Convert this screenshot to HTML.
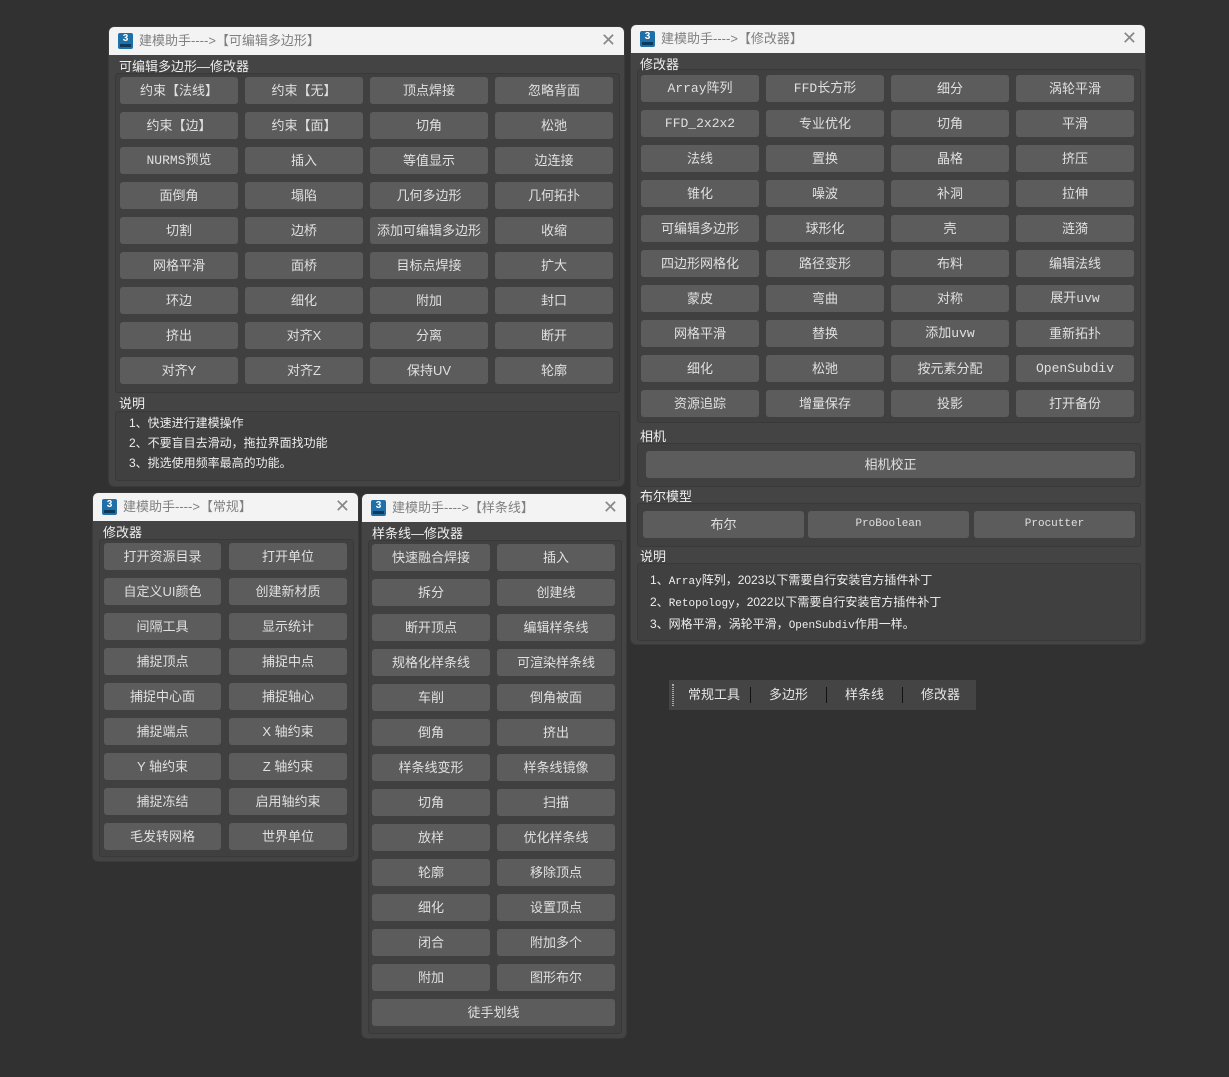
<!DOCTYPE html>
<html><head><meta charset="utf-8"><style>
*{margin:0;padding:0;box-sizing:border-box}
body{width:1229px;height:1077px;background:#313131;position:relative;overflow:hidden;font-family:"Liberation Sans","Noto Sans CJK SC",sans-serif;font-size:13px;color:#e6e6e6}
.win{position:absolute;background:#444;border-radius:6px;overflow:hidden;border:1px solid #3a3a3a}
.tb{height:28px;background:#f3f3f3;position:relative;color:#808080;font-size:13px;line-height:28px;padding-left:30px}
.ic{position:absolute;left:9px;top:6px;width:15px;height:16px;background:#1f6fa8;border-radius:2px;color:#fff;font-size:10px;line-height:11px;text-align:center;font-weight:bold}
.ic:after{content:"";position:absolute;left:2px;right:2px;bottom:2px;height:3px;background:#0d3a5a}
.x{position:absolute;right:8px;top:0;font-size:18px;color:#888;line-height:26px}
.lbl{position:absolute;font-size:13px;color:#eee;z-index:3;line-height:16px}
.grp{position:absolute;border:1px solid #393939;background:#404040;border-radius:3px}
.g{position:absolute;display:grid;column-gap:7px;row-gap:8px;grid-auto-rows:27px}
.g div,.b{background:#5c5c5c;border-radius:3px;text-align:center;line-height:27px;font-size:13px;color:#e0e0e0;white-space:nowrap}
.b{position:absolute;height:27px}
.m{font-family:"Liberation Mono","Noto Sans CJK SC",monospace;font-size:11px}
.t{position:absolute;font-size:12px;color:#eee;line-height:20px}
</style></head><body>

<!-- Window 1 -->
<div class="win" style="left:108px;top:26px;width:517px;height:461px">
<div class="tb"><span class="ic">3</span>建模助手----&gt;【可编辑多边形】<span class="x">✕</span></div>
<div class="lbl" style="left:10px;top:32px">可编辑多边形—修改器</div>
<div class="grp" style="left:6px;top:46px;width:505px;height:320px"></div>
<div class="g" style="left:11px;top:50px;grid-template-columns:repeat(4,118px)">
<div>约束【法线】</div><div>约束【无】</div><div>顶点焊接</div><div>忽略背面</div>
<div>约束【边】</div><div>约束【面】</div><div>切角</div><div>松弛</div>
<div class="m">NURMS预览</div><div>插入</div><div>等值显示</div><div>边连接</div>
<div>面倒角</div><div>塌陷</div><div>几何多边形</div><div>几何拓扑</div>
<div>切割</div><div>边桥</div><div>添加可编辑多边形</div><div>收缩</div>
<div>网格平滑</div><div>面桥</div><div>目标点焊接</div><div>扩大</div>
<div>环边</div><div>细化</div><div>附加</div><div>封口</div>
<div>挤出</div><div>对齐X</div><div>分离</div><div>断开</div>
<div>对齐Y</div><div>对齐Z</div><div>保持UV</div><div>轮廓</div>
</div>
<div class="lbl" style="left:10px;top:369px">说明</div>
<div class="grp" style="left:6px;top:384px;width:505px;height:70px"></div>
<div class="t" style="left:20px;top:386px">1、快速进行建模操作<br>2、不要盲目去滑动，拖拉界面找功能<br>3、挑选使用频率最高的功能。</div>
</div>

<!-- Window 2 -->
<div class="win" style="left:630px;top:24px;width:516px;height:621px">
<div class="tb"><span class="ic">3</span>建模助手----&gt;【修改器】<span class="x">✕</span></div>
<div class="lbl" style="left:9px;top:32px">修改器</div>
<div class="grp" style="left:6px;top:44px;width:504px;height:354px"></div>
<div class="g" style="left:10px;top:50px;grid-template-columns:repeat(4,118px)">
<div class="m">Array阵列</div><div class="m">FFD长方形</div><div>细分</div><div>涡轮平滑</div>
<div class="m">FFD_2x2x2</div><div>专业优化</div><div>切角</div><div>平滑</div>
<div>法线</div><div>置换</div><div>晶格</div><div>挤压</div>
<div>锥化</div><div>噪波</div><div>补洞</div><div>拉伸</div>
<div>可编辑多边形</div><div>球形化</div><div>壳</div><div>涟漪</div>
<div>四边形网格化</div><div>路径变形</div><div>布料</div><div>编辑法线</div>
<div>蒙皮</div><div>弯曲</div><div>对称</div><div class="m">展开uvw</div>
<div>网格平滑</div><div>替换</div><div class="m">添加uvw</div><div>重新拓扑</div>
<div>细化</div><div>松弛</div><div>按元素分配</div><div class="m">OpenSubdiv</div>
<div>资源追踪</div><div>增量保存</div><div>投影</div><div>打开备份</div>
</div>
<div class="lbl" style="left:9px;top:404px">相机</div>
<div class="grp" style="left:6px;top:418px;width:504px;height:44px"></div>
<div class="b" style="left:15px;top:426px;width:489px">相机校正</div>
<div class="lbl" style="left:9px;top:464px">布尔模型</div>
<div class="grp" style="left:6px;top:478px;width:504px;height:44px"></div>
<div class="b" style="left:12px;top:486px;width:161px">布尔</div>
<div class="b m" style="left:177px;top:486px;width:161px">ProBoolean</div>
<div class="b m" style="left:343px;top:486px;width:161px">Procutter</div>
<div class="lbl" style="left:9px;top:524px">说明</div>
<div class="grp" style="left:6px;top:538px;width:504px;height:78px"></div>
<div class="t" style="left:19px;top:545px">1、<span class="m">Array</span>阵列，2023以下需要自行安装官方插件补丁<br>2、<span class="m">Retopology</span>，2022以下需要自行安装官方插件补丁<br>3、网格平滑，涡轮平滑，<span class="m">OpenSubdiv</span>作用一样。</div>
</div>

<!-- Window 3 -->
<div class="win" style="left:92px;top:492px;width:267px;height:370px">
<div class="tb"><span class="ic">3</span>建模助手----&gt;【常规】<span class="x">✕</span></div>
<div class="lbl" style="left:10px;top:32px">修改器</div>
<div class="grp" style="left:6px;top:46px;width:255px;height:318px"></div>
<div class="g" style="left:11px;top:50px;grid-template-columns:117px 118px;column-gap:8px">
<div>打开资源目录</div><div>打开单位</div>
<div>自定义UI颜色</div><div>创建新材质</div>
<div>间隔工具</div><div>显示统计</div>
<div>捕捉顶点</div><div>捕捉中点</div>
<div>捕捉中心面</div><div>捕捉轴心</div>
<div>捕捉端点</div><div>X 轴约束</div>
<div>Y 轴约束</div><div>Z 轴约束</div>
<div>捕捉冻结</div><div>启用轴约束</div>
<div>毛发转网格</div><div>世界单位</div>
</div>
</div>

<!-- Window 4 -->
<div class="win" style="left:361px;top:493px;width:266px;height:546px">
<div class="tb"><span class="ic">3</span>建模助手----&gt;【样条线】<span class="x">✕</span></div>
<div class="lbl" style="left:10px;top:32px">样条线—修改器</div>
<div class="grp" style="left:6px;top:46px;width:254px;height:494px"></div>
<div class="g" style="left:10px;top:50px;grid-template-columns:118px 118px">
<div>快速融合焊接</div><div>插入</div>
<div>拆分</div><div>创建线</div>
<div>断开顶点</div><div>编辑样条线</div>
<div>规格化样条线</div><div>可渲染样条线</div>
<div>车削</div><div>倒角被面</div>
<div>倒角</div><div>挤出</div>
<div>样条线变形</div><div>样条线镜像</div>
<div>切角</div><div>扫描</div>
<div>放样</div><div>优化样条线</div>
<div>轮廓</div><div>移除顶点</div>
<div>细化</div><div>设置顶点</div>
<div>闭合</div><div>附加多个</div>
<div>附加</div><div>图形布尔</div>
<div style="grid-column:1 / 3">徒手划线</div>
</div>
</div>

<!-- Toolbar -->
<div style="position:absolute;left:669px;top:680px;width:307px;height:30px;background:#444;font-size:13px;color:#e6e6e6;line-height:30px">
<span style="position:absolute;left:3px;top:4px;width:2px;height:22px;border-left:1px dotted #aaa;border-right:1px dotted #aaa"></span>
<span style="position:absolute;left:19px">常规工具</span>
<span style="position:absolute;left:81px;top:7px;width:1px;height:16px;background:#111"></span>
<span style="position:absolute;left:100px">多边形</span>
<span style="position:absolute;left:157px;top:7px;width:1px;height:16px;background:#111"></span>
<span style="position:absolute;left:176px">样条线</span>
<span style="position:absolute;left:233px;top:7px;width:1px;height:16px;background:#111"></span>
<span style="position:absolute;left:252px">修改器</span>
</div>
</body></html>
